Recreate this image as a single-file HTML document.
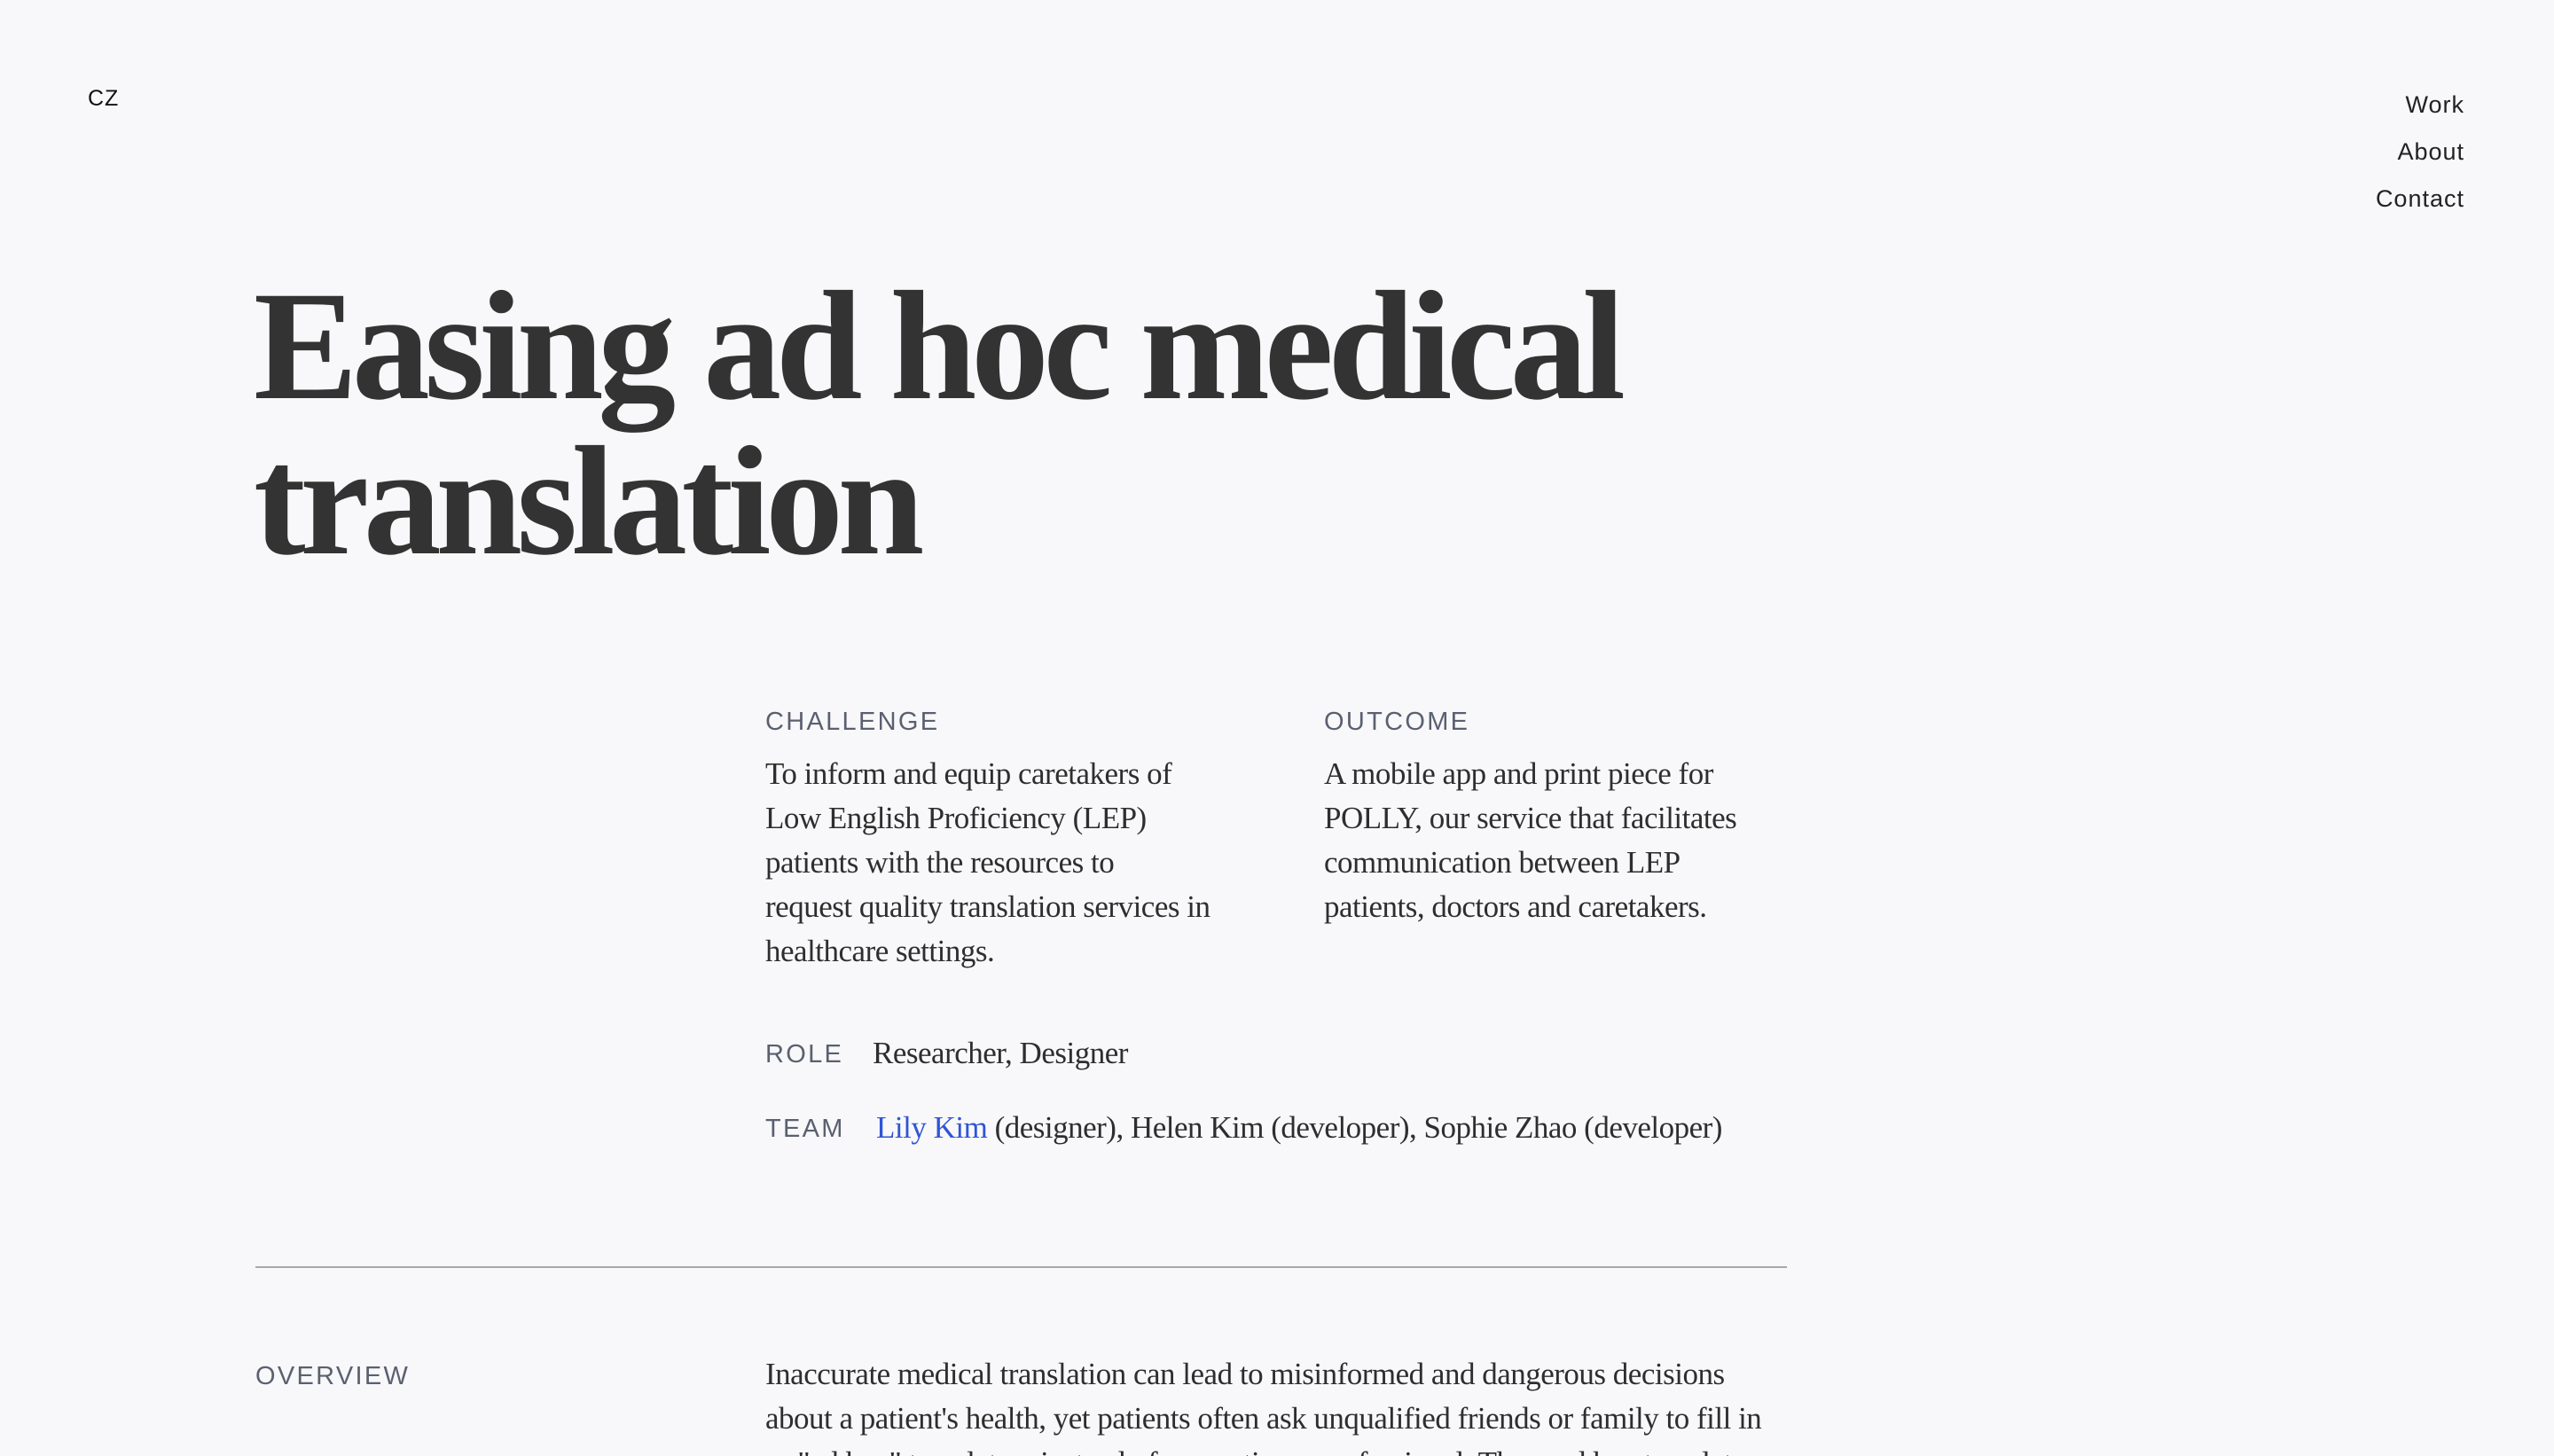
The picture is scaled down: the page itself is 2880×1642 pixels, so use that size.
<!DOCTYPE html>
<html><head><style>
html,body{margin:0;padding:0;background:#f8f8fa;width:2880px;height:1642px;overflow:hidden;position:relative}
.a{position:absolute;white-space:nowrap}
.sans{font-family:"Liberation Sans",sans-serif}
.serif{font-family:"Liberation Serif",serif;color:#2e2e2e}
.lbl{font-family:"Liberation Sans",sans-serif;font-size:29px;letter-spacing:2.3px;color:#5b6070;line-height:1}
.nav{right:101px;font-size:27px;letter-spacing:1px;color:#222;text-align:right;line-height:1}
.body{font-size:35px;line-height:50px;letter-spacing:-0.5px}
</style></head><body>
<div class="a sans" style="left:99px;top:97px;font-size:25px;letter-spacing:1px;color:#111">CZ</div>
<div class="a sans nav" style="top:105px">Work</div>
<div class="a sans nav" style="top:158px">About</div>
<div class="a sans nav" style="top:211px">Contact</div>

<div class="a serif" style="left:286px;top:303px;font-size:176px;font-weight:bold;line-height:175px;letter-spacing:-6.5px;color:#333">Easing ad hoc medical<br>translation</div>

<div class="a lbl" style="left:863px;top:800px">CHALLENGE</div>
<div class="a lbl" style="left:1493px;top:800px">OUTCOME</div>
<div class="a serif body" style="left:863px;top:848px">To inform and equip caretakers of<br>Low English Proficiency (LEP)<br>patients with the resources to<br>request quality translation services in<br>healthcare settings.</div>
<div class="a serif body" style="left:1493px;top:848px">A mobile app and print piece for<br>POLLY, our service that facilitates<br>communication between LEP<br>patients, doctors and caretakers.</div>

<div class="a lbl" style="left:863px;top:1175px">ROLE</div>
<div class="a serif body" style="left:984px;top:1163px">Researcher, Designer</div>
<div class="a lbl" style="left:863px;top:1259px">TEAM</div>
<div class="a serif body" style="left:988px;top:1247px"><span style="color:#2f55d4">Lily Kim</span> (designer), Helen Kim (developer), Sophie Zhao (developer)</div>

<div class="a" style="left:288px;top:1428px;width:1727px;height:2px;background:#a8a8ac"></div>

<div class="a lbl" style="left:288px;top:1538px">OVERVIEW</div>
<div class="a serif body" style="left:863px;top:1525px">Inaccurate medical translation can lead to misinformed and dangerous decisions<br>about a patient's health, yet patients often ask unqualified friends or family to fill in<br>as "ad hoc" translators instead of requesting a professional. These ad hoc translators</div>
</body></html>
